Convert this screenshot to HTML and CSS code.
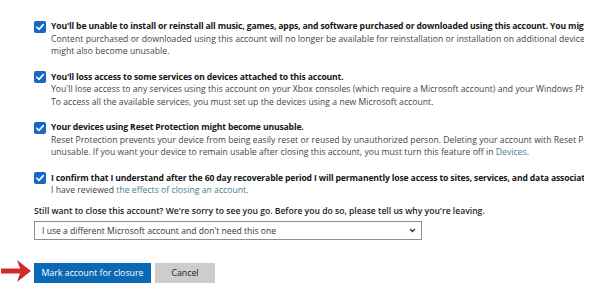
FILE: index.html
```html
<!DOCTYPE html>
<html lang="en">
<head>
<meta charset="utf-8">
<title>Close account</title>
<link rel="stylesheet" href="styles.css">
</head>
<body>
<div class="page">
  <div class="clip">
    <div class="item">
      <span class="check"><svg viewBox="0 0 12 12" width="12" height="12"><path d="M2.8 6.2 L5 8.4 L9.3 3.6" fill="none" stroke="#fff" stroke-width="1.6" stroke-linecap="round" stroke-linejoin="round"/></svg></span>
      <div class="text">
        <div class="title">You'll be unable to install or reinstall all music, games, apps, and software purchased or downloaded using this account. You might lose the ability to access</div>
        <div class="line">Content purchased or downloaded using this account will no longer be available for reinstallation or installation on additional devices and some of them</div>
        <div class="line">might also become unusable.</div>
      </div>
    </div>
    <div class="item">
      <span class="check"><svg viewBox="0 0 12 12" width="12" height="12"><path d="M2.8 6.2 L5 8.4 L9.3 3.6" fill="none" stroke="#fff" stroke-width="1.6" stroke-linecap="round" stroke-linejoin="round"/></svg></span>
      <div class="text">
        <div class="title">You'll loss access to some services on devices attached to this account.</div>
        <div class="line">You'll lose access to any services using this account on your Xbox consoles (which require a Microsoft account) and your Windows Phone devices.</div>
        <div class="line">To access all the available services, you must set up the devices using a new Microsoft account.</div>
      </div>
    </div>
    <div class="item">
      <span class="check"><svg viewBox="0 0 12 12" width="12" height="12"><path d="M2.8 6.2 L5 8.4 L9.3 3.6" fill="none" stroke="#fff" stroke-width="1.6" stroke-linecap="round" stroke-linejoin="round"/></svg></span>
      <div class="text">
        <div class="title">Your devices using Reset Protection might become unusable.</div>
        <div class="line">Reset Protection prevents your device from being easily reset or reused by unauthorized person. Deleting your account with Reset Protection on could make your device</div>
        <div class="line">unusable. If you want your device to remain usable after closing this account, you must turn this feature off in <a class="link" href="#">Devices</a>.</div>
      </div>
    </div>
    <div class="item item-last">
      <span class="check"><svg viewBox="0 0 12 12" width="12" height="12"><path d="M2.8 6.2 L5 8.4 L9.3 3.6" fill="none" stroke="#fff" stroke-width="1.6" stroke-linecap="round" stroke-linejoin="round"/></svg></span>
      <div class="text">
        <div class="title">I confirm that I understand after the 60 day recoverable period I will permanently lose access to sites, services, and data associated with this account.</div>
        <div class="line">I have reviewed <a class="link" href="#">the effects of closing an account</a>.</div>
      </div>
    </div>
    <div class="question">Still want to close this account? We're sorry to see you go. Before you do so, please tell us why you're leaving.</div>
    <div class="select">
      <span>I use a different Microsoft account and don't need this one</span>
      <svg class="chev" viewBox="0 0 8 6" width="7" height="5"><path d="M1 1.2 L4 4.3 L7 1.2" fill="none" stroke="#333" stroke-width="1.6"/></svg>
    </div>
    <div class="actions">
      <button class="btn btn-primary">Mark account for closure</button>
      <button class="btn btn-secondary">Cancel</button>
    </div>
  </div>
  <svg class="arrow" viewBox="0 0 32 26" width="32" height="26"><path d="M1 10.5 L20 10.5 L17 2 L31 13 L17 24 L20 15.5 L1 15.5 Z" fill="#d12a2a"/></svg>
</div>
</body>
</html>
```

FILE: styles.css
```css
* { box-sizing: border-box; }
html, body { margin: 0; padding: 0; background: #fff; }
body {
  font-family: "Open Sans", "Noto Sans", "Liberation Sans", sans-serif;
  font-size: 8.6px;
  color: #3a3a3a;
}
.page {
  position: relative;
  width: 616px;
  height: 302px;
  padding: 20px 0 0 34px;
}
.clip {
  width: 550px;
  overflow: hidden;
}
.item {
  display: flex;
  align-items: flex-start;
  gap: 5px;
  margin-bottom: 13px;
}
.item-last { margin-bottom: 8px; }
.check {
  flex: none;
  width: 12px;
  height: 12px;
  margin-top: 0.5px;
  border-radius: 2px;
  background: #1668c4;
  display: flex;
}
.text { min-width: 0; }
.title, .line, .question {
  white-space: nowrap;
  line-height: 12.5px;
}
.title {
  font-weight: 700;
  color: #161616;
  letter-spacing: -0.14px;
}
.line {
  color: #444;
  letter-spacing: 0.04px;
}
.link { color: #41808f; text-decoration: none; }
.question {
  font-weight: 600;
  color: #222;
  margin-bottom: 4px;
}
.select {
  width: 388px;
  height: 19px;
  border: 1px solid #8f8f8f;
  display: flex;
  align-items: center;
  justify-content: space-between;
  padding: 0 5px 0 7px;
  color: #333;
  white-space: nowrap;
}
.chev { flex: none; }
.actions {
  display: flex;
  gap: 4px;
  margin-top: 23px;
}
.btn {
  font-family: inherit;
  font-size: 8.8px;
  height: 20px;
  border: none;
  padding: 0;
  cursor: pointer;
}
.btn-primary {
  width: 117px;
  background: #0a68b5;
  color: #fff;
}
.btn-secondary {
  width: 60px;
  background: #cdcdcd;
  color: #222;
}
.arrow {
  position: absolute;
  left: 0;
  top: 258px;
}
```
